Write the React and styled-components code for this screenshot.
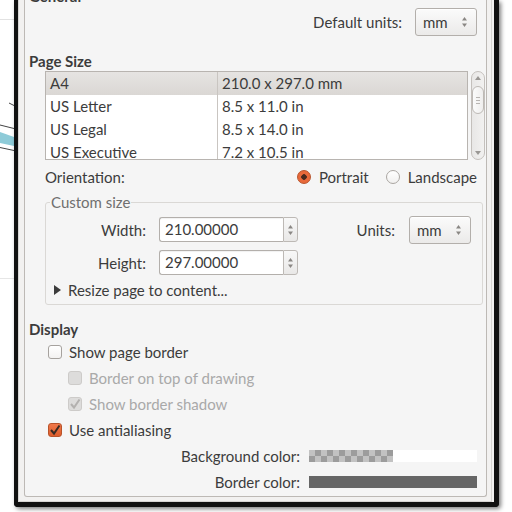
import React from 'react';
import styled, { createGlobalStyle } from 'styled-components';

const GlobalStyle = createGlobalStyle`
  html, body {
    margin: 0;
    padding: 0;
    background: #ffffff;
  }
  body {
    font-family: Lato, "Noto Sans", sans-serif;
    font-size: 15px;
    color: #3c3c3c;
  }
`;

const Root = styled.div`
  display: flex;
  align-items: flex-start;
  width: 512px;
  height: 512px;
  overflow: hidden;
  background: #ffffff;
`;

const Canvas = styled.svg`
  flex: none;
  width: 14px;
  height: 512px;
`;

const Window = styled.div`
  flex: none;
  width: 485px;
  box-sizing: border-box;
  overflow: hidden;
  background: #f2f1f0;
  border-left: 4px solid #111;
  border-right: 5px solid #111;
  border-bottom: 5px solid #111;
  border-radius: 0 0 4px 4px;
  box-shadow: 2px 2px 4px rgba(0, 0, 0, 0.5);
`;

const OuterFrame = styled.div`
  margin-right: 2px;
  padding: 0 4px 4px 5px;
  border: 1px solid #d6d4d2;
  border-top: none;
`;

const Panel = styled.div`
  display: flex;
  flex-direction: column;
  background: #f5f5f5;
  border: 1px solid #bdb9b5;
  border-top: none;
  border-radius: 0 0 3px 3px;
  padding: 0 9px 1px 4px;
`;

const Heading = styled.div`
  height: 18px;
  line-height: 18px;
  font-weight: bold;
  margin-top: ${p => p.$top}px;
`;

const DefaultRow = styled.div`
  display: flex;
  justify-content: flex-end;
  align-items: center;
  gap: 13px;
  height: 28px;
  margin-top: 3px;
`;

const Combo = styled.div`
  display: flex;
  align-items: center;
  justify-content: space-between;
  box-sizing: border-box;
  width: 62px;
  height: 28px;
  padding: 0 8px 0 7px;
  border: 1px solid #b3afab;
  border-radius: 3px;
  background: linear-gradient(#fbfbfb, #ebeae9);
  box-shadow: inset 0 1px 0 #fff;
`;

const ListRow = styled.div`
  display: flex;
  gap: 3px;
  margin: 1px -8px 0 16px;
  height: 89px;
`;

const Table = styled.div`
  flex: 1;
  border: 1px solid #b8b4b0;
  background: #ffffff;
  overflow: hidden;
`;

const TableRow = styled.div`
  display: grid;
  grid-template-columns: 171px 1fr;
  height: 23px;
  line-height: 23px;
  background: ${p => (p.$selected ? 'linear-gradient(#e6e4e2, #dad7d4)' : '#ffffff')};
`;

const Cell = styled.div`
  padding-left: 4px;
  white-space: nowrap;
  border-left: ${p => (p.$divider ? '1px solid #c9c5c1' : 'none')};
`;

const Scrollbar = styled.div`
  position: relative;
  flex: none;
  width: 14px;
  box-sizing: border-box;
  border: 1px solid #c4c0bc;
  border-radius: 7px;
  background: linear-gradient(90deg, #e8e7e6, #f2f1f0);
  display: flex;
  flex-direction: column;
  align-items: center;
  justify-content: space-between;
  padding: 4px 0;
`;

const Thumb = styled.div`
  position: absolute;
  left: 0;
  top: 14px;
  width: 12px;
  height: 28px;
  box-sizing: border-box;
  border: 1px solid #bdb9b5;
  border-radius: 6px;
  background: linear-gradient(90deg, #fbfbfb, #efeeed);
  display: flex;
  align-items: center;
  justify-content: center;
`;

const OrientRow = styled.div`
  display: flex;
  align-items: center;
  justify-content: space-between;
  height: 22px;
  margin: 6px 0 0 16px;
`;

const Options = styled.div`
  display: flex;
  align-items: center;
  gap: 17px;
`;

const Option = styled.label`
  display: flex;
  align-items: center;
  gap: 8px;
`;

const Radio = styled.span`
  width: 14px;
  height: 14px;
  box-sizing: border-box;
  border-radius: 50%;
  border: 1px solid ${p => (p.$on ? '#b9532a' : '#aaa6a2')};
  background: ${p => (p.$on ? 'radial-gradient(circle, #4a2a1e 0 2.5px, #e8693a 3px)' : 'linear-gradient(#ffffff, #f1f0ef)')};
`;

const Fieldset = styled.fieldset`
  margin: 5px -6px 0 16px;
  padding: 6px 11px 5px 0;
  border: 1px solid #dad8d5;
  border-radius: 3px;
  min-width: 0;
`;

const Legend = styled.legend`
  margin-left: 4px;
  padding: 0 1px;
  height: 18px;
  line-height: 18px;
  color: #6f6f6f;
`;

const SizeGrid = styled.div`
  display: grid;
  grid-template-columns: 100px 139px 1fr auto 62px;
  grid-template-rows: 25px 25px;
  column-gap: 13px;
  row-gap: 8px;
  align-items: center;
`;

const Label = styled.span`
  text-align: right;
  white-space: nowrap;
`;

const GridLabel = styled(Label)`
  grid-column: 1;
  grid-row: ${p => p.$row};
`;

const UnitsLabel = styled.span`
  grid-column: 4;
  grid-row: 1;
  margin-right: 1px;
`;

const UnitsCombo = styled(Combo)`
  grid-column: 5;
  grid-row: 1;
`;

const Spin = styled.div`
  grid-column: 2;
  grid-row: ${p => p.$row};
  display: flex;
  height: 25px;
`;

const Entry = styled.div`
  flex: 1;
  box-sizing: border-box;
  border: 1px solid #b3afab;
  border-right: none;
  border-radius: 3px 0 0 3px;
  background: #ffffff;
  padding-left: 5px;
  line-height: 23px;
  box-shadow: inset 0 1px 1px rgba(0, 0, 0, 0.06);
`;

const SpinButtons = styled.div`
  width: 15px;
  box-sizing: border-box;
  border: 1px solid #bdb9b5;
  border-radius: 0 3px 3px 0;
  background: linear-gradient(#f8f8f8, #e9e8e7);
  display: flex;
  align-items: center;
  justify-content: center;
`;

const Expander = styled.div`
  display: flex;
  align-items: center;
  gap: 7px;
  height: 18px;
  margin: 6px 0 0 8px;
`;

const CheckRow = styled.label`
  display: flex;
  align-items: center;
  gap: 7px;
  height: 26px;
  margin-left: ${p => p.$indent}px;
  color: ${p => (p.$disabled ? '#a9a9a9' : '#3c3c3c')};
`;

const Box = styled.span`
  width: 14px;
  height: 14px;
  box-sizing: border-box;
  border-radius: 3px;
  display: flex;
  align-items: center;
  justify-content: center;
  border: 1px solid ${p => (p.$on && !p.$disabled ? '#b9532a' : p.$disabled ? '#cdcbc9' : '#a6a29e')};
  background: ${p =>
    p.$on && !p.$disabled
      ? 'linear-gradient(#f0784a, #dd5d2c)'
      : p.$disabled
      ? '#dddcdb'
      : 'linear-gradient(#ffffff, #f3f2f1)'};
`;

const ColorRow = styled.div`
  display: grid;
  grid-template-columns: 1fr 168px;
  column-gap: 9px;
  align-items: center;
  height: 26px;
`;

const Swatch = styled.div`
  height: 12px;
  background: ${p => p.$bg};
`;

const checker =
  'linear-gradient(90deg, transparent 0 84px, #ffffff 84px), ' +
  'repeating-conic-gradient(#9c9c9c 0 25%, #c2c2c2 0 50%) 0 0 / 12px 12px';

const Arrows = () => (
  <svg width="7" height="12" viewBox="0 0 7 12">
    <path d="M3.5 1 L6 4.5 H1 Z" fill="#8a8784" />
    <path d="M3.5 11 L6 7.5 H1 Z" fill="#8a8784" />
  </svg>
);

const Check = ({ color }) => (
  <svg width="12" height="12" viewBox="0 0 12 12">
    <path d="M2 6 L5 9.5 L10.5 1.5" fill="none" stroke={color} strokeWidth="2" />
  </svg>
);

const rows = [
  ['A4', '210.0 x 297.0 mm'],
  ['US Letter', '8.5 x 11.0 in'],
  ['US Legal', '8.5 x 14.0 in'],
  ['US Executive', '7.2 x 10.5 in'],
];

export default function App() {
  return (
    <Root>
      <GlobalStyle />
      <Canvas viewBox="0 0 14 512">
        <line x1="0" y1="19.5" x2="14" y2="19.5" stroke="#e2e2e2" />
        <line x1="0" y1="278.5" x2="14" y2="278.5" stroke="#e6e6e6" />
        <line x1="9" y1="103" x2="14" y2="105.5" stroke="#444" />
        <line x1="0" y1="125" x2="14" y2="128.5" stroke="#444" />
        <path d="M0 132 L14 137 L14 146 L0 143 Z" fill="#8ecbd8" />
        <line x1="0" y1="147.5" x2="14" y2="150.5" stroke="#444" />
      </Canvas>
      <Window>
        <OuterFrame>
          <Panel>
            <Heading $top={-13}>General</Heading>
            <DefaultRow>
              <span>Default units:</span>
              <Combo>
                mm
                <Arrows />
              </Combo>
            </DefaultRow>
            <Heading $top={16}>Page Size</Heading>
            <ListRow>
              <Table>
                {rows.map(([name, size], i) => (
                  <TableRow key={name} $selected={i === 0}>
                    <Cell>{name}</Cell>
                    <Cell $divider>{size}</Cell>
                  </TableRow>
                ))}
              </Table>
              <Scrollbar>
                <svg width="6" height="4" viewBox="0 0 6 4">
                  <path d="M3 0 L6 4 H0 Z" fill="#9a9794" />
                </svg>
                <Thumb>
                  <svg width="4" height="7" viewBox="0 0 4 7">
                    <path d="M0 0.5 H4 M0 3.5 H4 M0 6.5 H4" stroke="#b8b5b2" />
                  </svg>
                </Thumb>
                <svg width="6" height="4" viewBox="0 0 6 4">
                  <path d="M3 4 L6 0 H0 Z" fill="#9a9794" />
                </svg>
              </Scrollbar>
            </ListRow>
            <OrientRow>
              <span>Orientation:</span>
              <Options>
                <Option>
                  <Radio $on />
                  Portrait
                </Option>
                <Option>
                  <Radio />
                  Landscape
                </Option>
              </Options>
            </OrientRow>
            <Fieldset>
              <Legend>Custom size</Legend>
              <SizeGrid>
                <GridLabel $row={1}>Width:</GridLabel>
                <Spin $row={1}>
                  <Entry>210.00000</Entry>
                  <SpinButtons>
                    <Arrows />
                  </SpinButtons>
                </Spin>
                <UnitsLabel>Units:</UnitsLabel>
                <UnitsCombo>
                  mm
                  <Arrows />
                </UnitsCombo>
                <GridLabel $row={2}>Height:</GridLabel>
                <Spin $row={2}>
                  <Entry>297.00000</Entry>
                  <SpinButtons>
                    <Arrows />
                  </SpinButtons>
                </Spin>
              </SizeGrid>
              <Expander>
                <svg width="7" height="10" viewBox="0 0 7 10">
                  <path d="M0 0 L7 5 L0 10 Z" fill="#3c3c3c" />
                </svg>
                Resize page to content...
              </Expander>
            </Fieldset>
            <Heading $top={15}>Display</Heading>
            <CheckRow $indent={19} style={{ marginTop: 1 }}>
              <Box />
              Show page border
            </CheckRow>
            <CheckRow $indent={39} $disabled>
              <Box $disabled />
              Border on top of drawing
            </CheckRow>
            <CheckRow $indent={39} $disabled>
              <Box $disabled $on>
                <Check color="#b3b1af" />
              </Box>
              Show border shadow
            </CheckRow>
            <CheckRow $indent={19}>
              <Box $on>
                <Check color="#3a2a22" />
              </Box>
              Use antialiasing
            </CheckRow>
            <ColorRow>
              <Label>Background color:</Label>
              <Swatch $bg={checker} />
            </ColorRow>
            <ColorRow>
              <Label>Border color:</Label>
              <Swatch $bg="#666666" />
            </ColorRow>
          </Panel>
        </OuterFrame>
      </Window>
    </Root>
  );
}
